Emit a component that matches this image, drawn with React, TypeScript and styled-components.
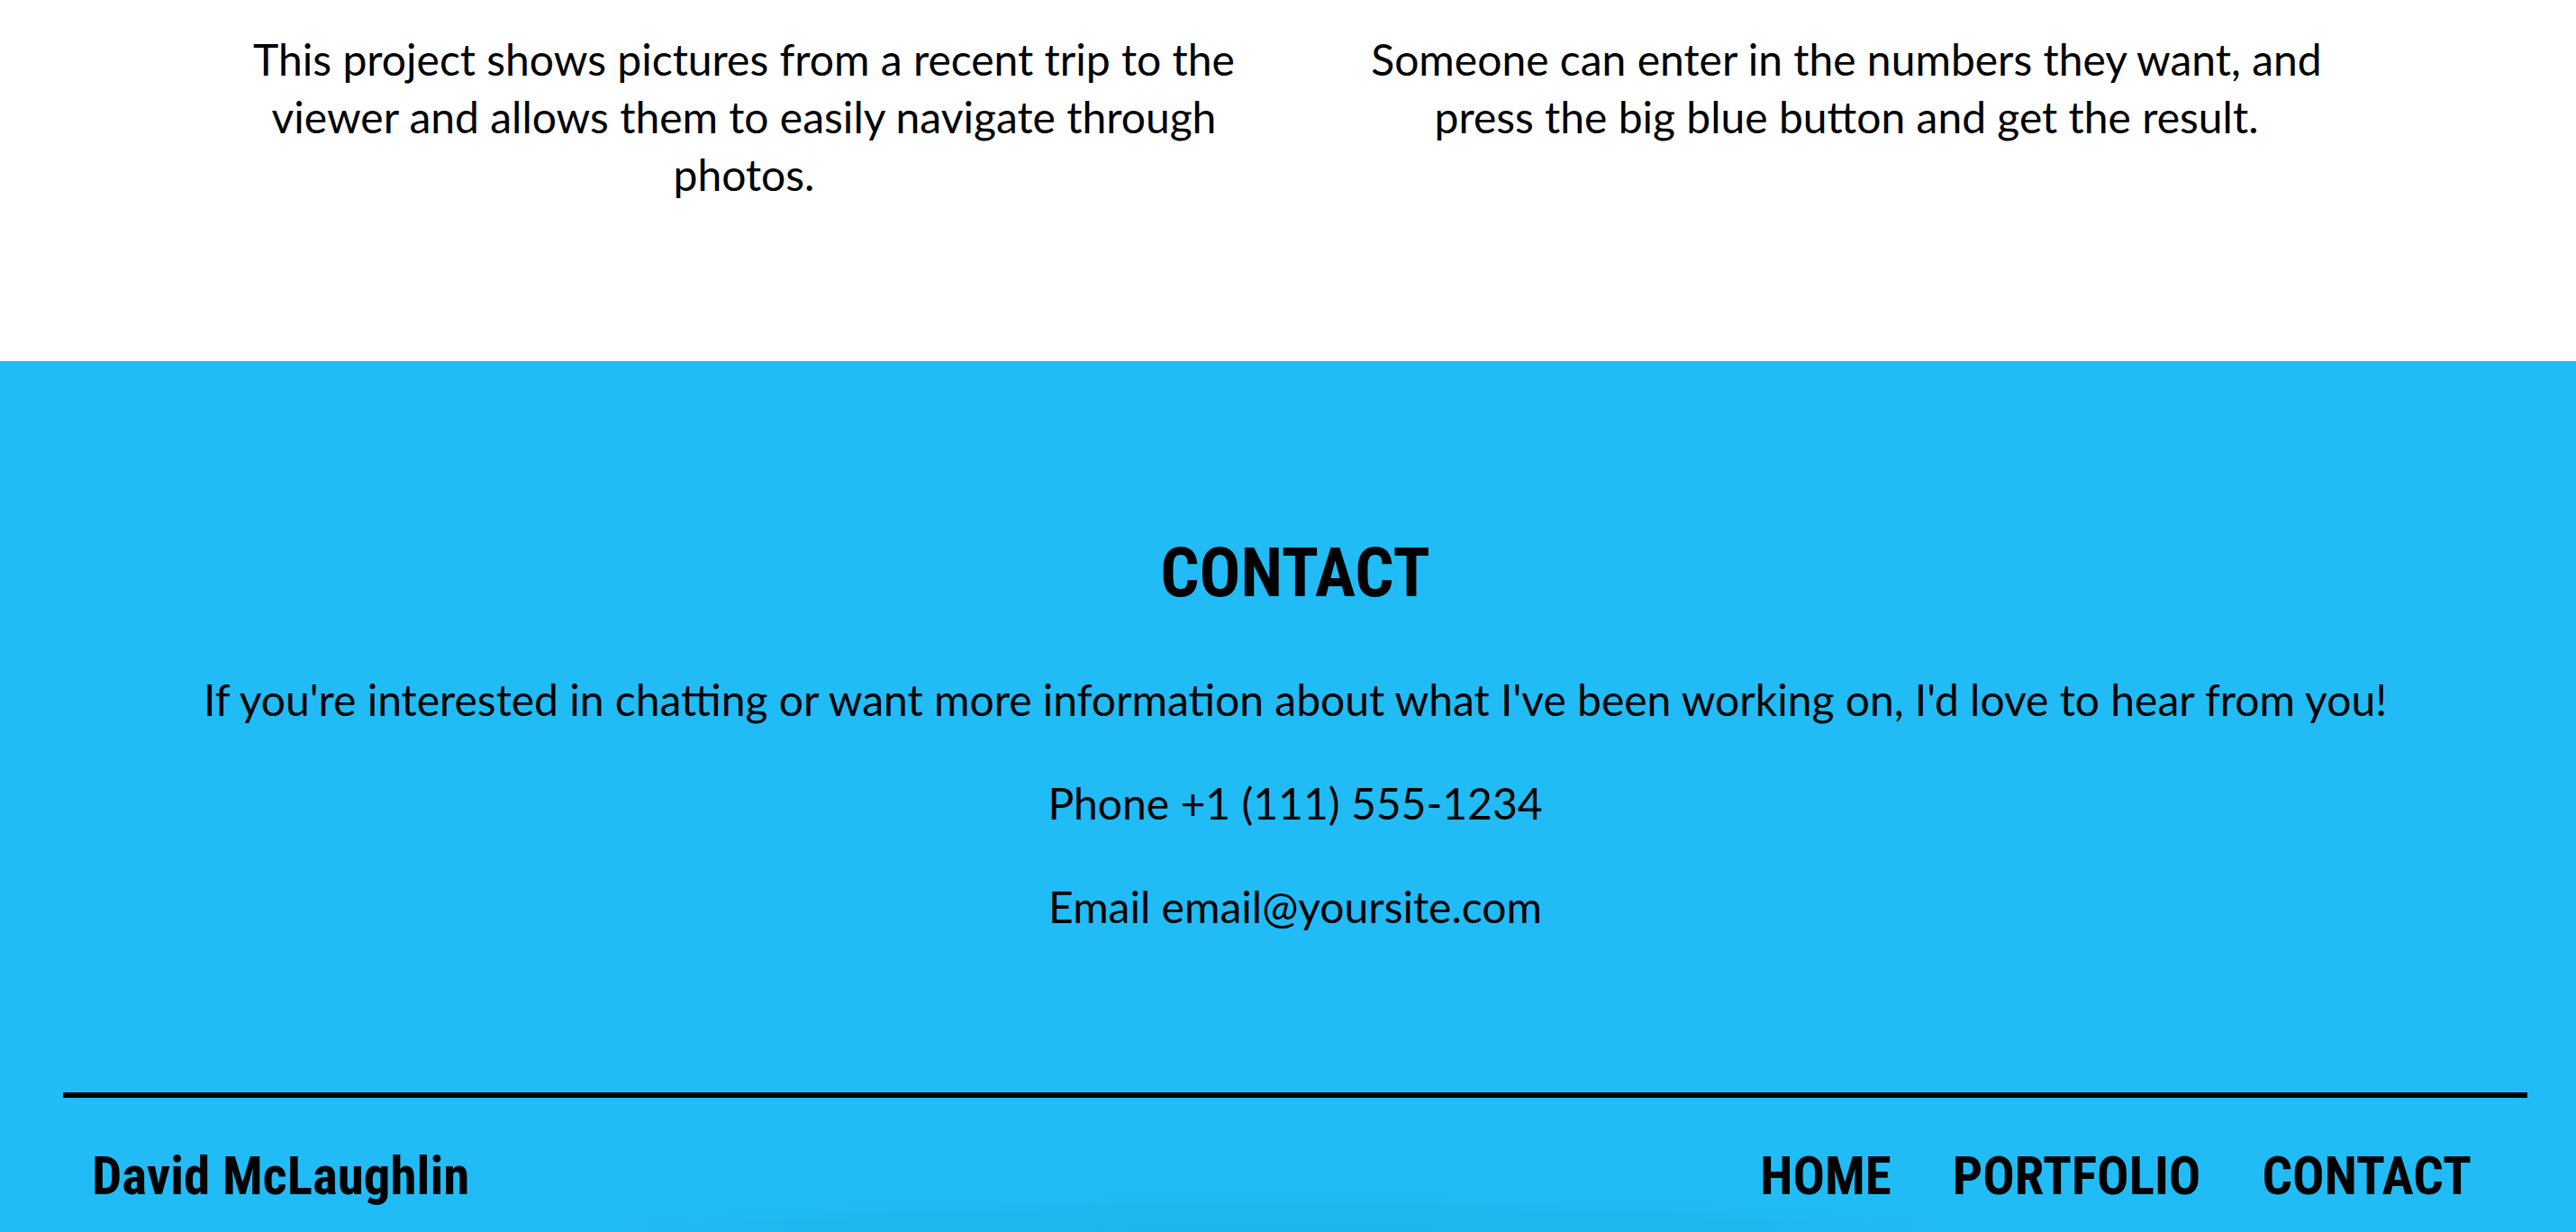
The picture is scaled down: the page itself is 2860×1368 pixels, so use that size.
import React from "react";
import styled, { createGlobalStyle } from "styled-components";

const GlobalStyle = createGlobalStyle`
  html, body { margin: 0; padding: 0; background: #fff; overflow: hidden; }
  body { font-family: "Lato", "Open Sans", sans-serif; color: #000; }
  * { box-sizing: border-box; }
`;

const condensed = `"Roboto Condensed", "Liberation Sans Narrow", "DejaVu Sans Condensed", "Roboto", sans-serif`;

const Page = styled.div`
  width: 2860px;
  height: 1368px;
  overflow: hidden;
  display: flex;
  flex-direction: column;
  background: #21bcf6;
`;

const Projects = styled.section`
  height: 401px;
  padding: 34px 198px 0 214px;
  background: #fff;
  display: grid;
  grid-template-columns: 1fr 1fr;
`;

const ProjectText = styled.p`
  margin: 0 auto;
  max-width: 1140px;
  text-align: center;
  font-size: 48px;
  line-height: 64px;
  color: #000;
`;

const Contact = styled.section`
  position: relative;
  flex: 1;
  padding-left: 16px;
  background: #21bcf6;
  display: flex;
  flex-direction: column;
  align-items: center;

  &::after {
    content: "";
    position: absolute;
    left: 520px;
    bottom: -60px;
    width: 1800px;
    height: 110px;
    background: radial-gradient(ellipse at center, rgba(0, 60, 110, 0.07) 0%, rgba(0, 60, 110, 0.035) 45%, rgba(0, 60, 110, 0) 70%);
    pointer-events: none;
  }
`;

const Heading = styled.h2`
  margin: 188px 0 0;
  font-family: ${condensed};
  font-weight: 700;
  font-size: 76px;
  line-height: 94px;
`;

const Para = styled.p<{ $first?: boolean }>`
  margin: ${(p) => (p.$first ? "62px" : "51px")} 0 0;
  font-size: 48px;
  line-height: 64px;
  text-align: center;
`;

const Link = styled.a`
  color: #000;
  text-decoration: none;
`;

const Divider = styled.hr`
  align-self: stretch;
  margin: 174px 54px 0 54px;
  border: none;
  height: 6px;
  background: #000;
`;

const FooterBar = styled.footer`
  align-self: stretch;
  display: flex;
  justify-content: space-between;
  align-items: center;
  padding: 52px 116px 0 86px;
`;

const Brand = styled.div`
  font-family: ${condensed};
  font-weight: 700;
  font-size: 59px;
  line-height: 70px;
`;

const Nav = styled.nav`
  display: flex;
  gap: 68px;
`;

const NavLink = styled.a`
  font-family: ${condensed};
  font-weight: 700;
  font-size: 59px;
  line-height: 70px;
  color: #000;
  text-decoration: none;
`;

export default function App() {
  return (
    <Page>
      <GlobalStyle />
      <Projects>
        <ProjectText>
          This project shows pictures from a recent trip to the viewer and allows them to easily navigate through photos.
        </ProjectText>
        <ProjectText>
          Someone can enter in the numbers they want, and press the big blue button and get the result.
        </ProjectText>
      </Projects>
      <Contact>
        <Heading>CONTACT</Heading>
        <Para $first>
          If you're interested in chatting or want more information about what I've been working on, I'd love to hear from you!
        </Para>
        <Para>
          Phone <Link href="#">+1 (111) 555-1234</Link>
        </Para>
        <Para>
          Email <Link href="#">email@yoursite.com</Link>
        </Para>
        <Divider />
        <FooterBar>
          <Brand>David McLaughlin</Brand>
          <Nav>
            <NavLink href="#">HOME</NavLink>
            <NavLink href="#">PORTFOLIO</NavLink>
            <NavLink href="#">CONTACT</NavLink>
          </Nav>
        </FooterBar>
      </Contact>
    </Page>
  );
}
